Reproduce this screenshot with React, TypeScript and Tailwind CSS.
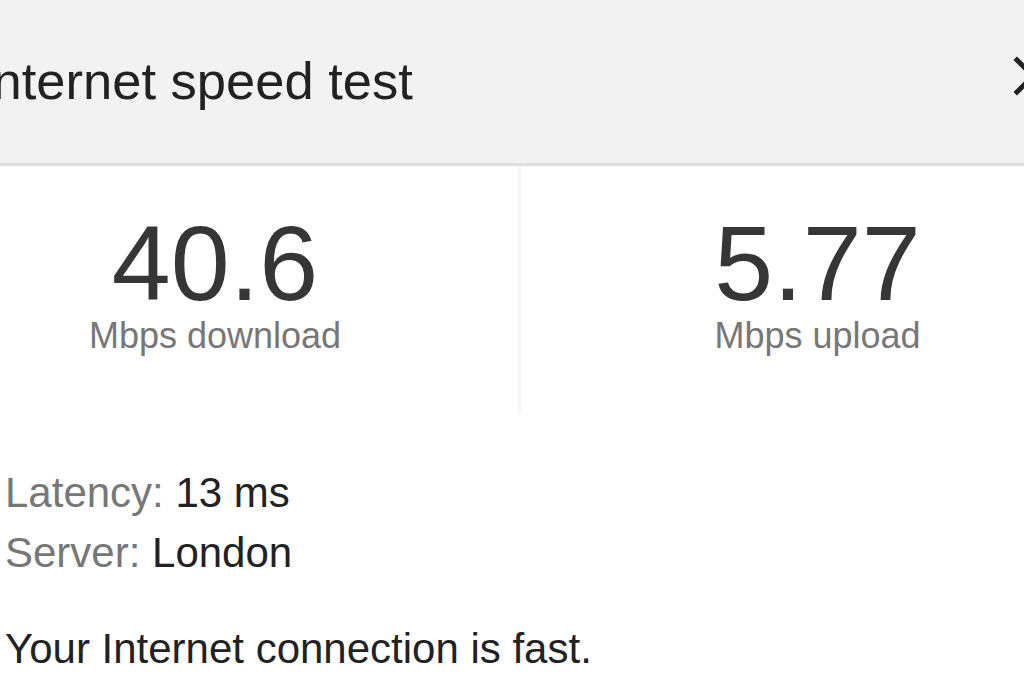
import React from "react";

const stats = [
  { value: "40.6", label: "Mbps download" },
  { value: "5.77", label: "Mbps upload" },
];

function CloseIcon() {
  return (
    <svg
      viewBox="0 0 42 42"
      className="w-[42px] h-[42px] shrink-0 mb-[11px]"
      aria-hidden
    >
      <path
        d="M5 5 L37 37 M37 5 L5 37"
        stroke="#222"
        strokeWidth="5"
        strokeLinecap="square"
        fill="none"
      />
    </svg>
  );
}

export default function App() {
  return (
    <div className="w-[1024px] h-[683px] overflow-hidden bg-white font-['Liberation_Sans',Arial,sans-serif]">
      <div className="ml-[-88px] w-[1240px]">
        <header className="h-[166px] bg-[#f2f2f2] border-b-[3px] border-[#dedede] flex items-center justify-between pl-[66px] pr-[98px]">
          <h1 className="text-[52.5px] leading-none text-[#222]">
            Internet speed test
          </h1>
          <CloseIcon />
        </header>

        <section className="grid grid-cols-[606px_596px] h-[247px]">
          {stats.map((stat, index) => (
            <div
              key={stat.label}
              className={
                index === 0
                  ? "flex flex-col items-center pt-[44px]"
                  : "flex flex-col items-center pt-[44px] border-l-[3px] border-[#f5f5f5]"
              }
            >
              <span className="text-[106px] leading-none text-[#363636]">
                {stat.value}
              </span>
              <span className="text-[36px] leading-none text-[#777] mt-[2px]">
                {stat.label}
              </span>
            </div>
          ))}
        </section>

        <section className="pl-[93px] pt-[50px] text-[42px] leading-[60px]">
          <p>
            <span className="text-[#777]">Latency: </span>
            <span className="text-[#222]">13 ms</span>
          </p>
          <p>
            <span className="text-[#777]">Server: </span>
            <span className="text-[#222]">London</span>
          </p>
          <p className="mt-[36px] text-[#222]">Your Internet connection is fast.</p>
        </section>
      </div>
    </div>
  );
}
